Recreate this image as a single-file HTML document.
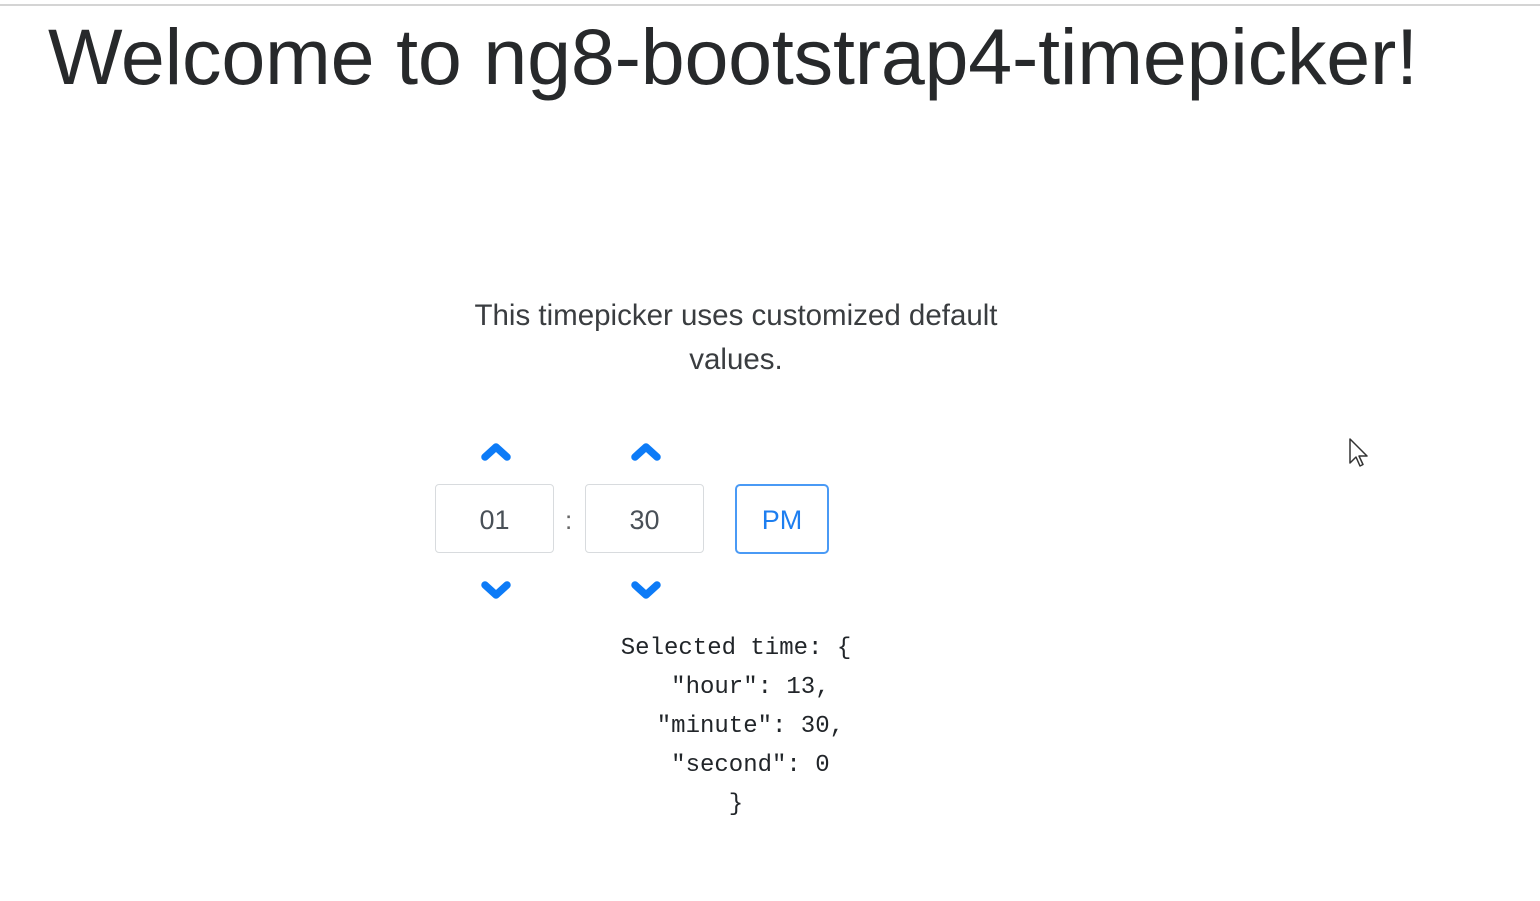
<!DOCTYPE html>
<html><head><style>
body{margin:0;width:1540px;height:901px;background:#fff;position:relative;overflow:hidden;font-family:"Liberation Sans",sans-serif;color:#212529}
.topline{position:absolute;left:0;top:4px;width:1540px;height:2px;background:#d4d4d4}
h1{position:absolute;left:48px;top:12px;margin:0;font-weight:500;font-size:79px;letter-spacing:-0.2px;white-space:nowrap;line-height:90px;color:#27292b}
.p{position:absolute;left:386px;width:700px;top:294px;text-align:center;font-size:29.5px;line-height:44px;color:#3a3d40}
.box{position:absolute;top:484px;width:117px;height:67px;border:1px solid #d8dbde;border-radius:4px;font-size:27px;line-height:70px;text-align:center;color:#495057}
.pm{position:absolute;left:735px;top:484px;width:90px;height:66px;border:2px solid #4a9af5;border-radius:5px;color:#1d7ef0;font-size:27px;line-height:68px;text-align:center}
.colon{position:absolute;left:565px;top:505px;font-size:26px;color:#666}
.chev{position:absolute}
pre{position:absolute;left:436px;width:600px;top:629px;margin:0;text-align:center;font-family:"Liberation Mono",monospace;font-size:24px;line-height:39px;color:#212529}
</style></head><body>
<div class="topline"></div>
<h1>Welcome to ng8-bootstrap4-timepicker!</h1>
<div class="p">This timepicker uses customized default<br>values.</div>
<svg class="chev" style="left:480px;top:440px" width="32" height="24" viewBox="0 0 32 24"><path d="M5 17 L16 7 L27 17" fill="none" stroke="#0d7bf7" stroke-width="7.5" stroke-linejoin="round" stroke-linecap="round"/></svg>
<svg class="chev" style="left:630px;top:440px" width="32" height="24" viewBox="0 0 32 24"><path d="M5 17 L16 7 L27 17" fill="none" stroke="#0d7bf7" stroke-width="7.5" stroke-linejoin="round" stroke-linecap="round"/></svg>
<svg class="chev" style="left:480px;top:578px" width="32" height="24" viewBox="0 0 32 24"><path d="M5 7 L16 17 L27 7" fill="none" stroke="#0d7bf7" stroke-width="7.5" stroke-linejoin="round" stroke-linecap="round"/></svg>
<svg class="chev" style="left:630px;top:578px" width="32" height="24" viewBox="0 0 32 24"><path d="M5 7 L16 17 L27 7" fill="none" stroke="#0d7bf7" stroke-width="7.5" stroke-linejoin="round" stroke-linecap="round"/></svg>
<div class="box" style="left:435px">01</div>
<div class="colon">:</div>
<div class="box" style="left:585px">30</div>
<div class="pm">PM</div>
<pre>Selected time: {
  "hour": 13,
  "minute": 30,
  "second": 0
}</pre>
<svg style="position:absolute;left:1348px;top:437px" width="22" height="32" viewBox="0 0 22 32"><path d="M2 2 L2 26 L8 20 L12 29 L15 27.5 L11 19 L19 19 Z" fill="#fff" stroke="#333" stroke-width="1.5" stroke-linejoin="round"/></svg>
</body></html>
